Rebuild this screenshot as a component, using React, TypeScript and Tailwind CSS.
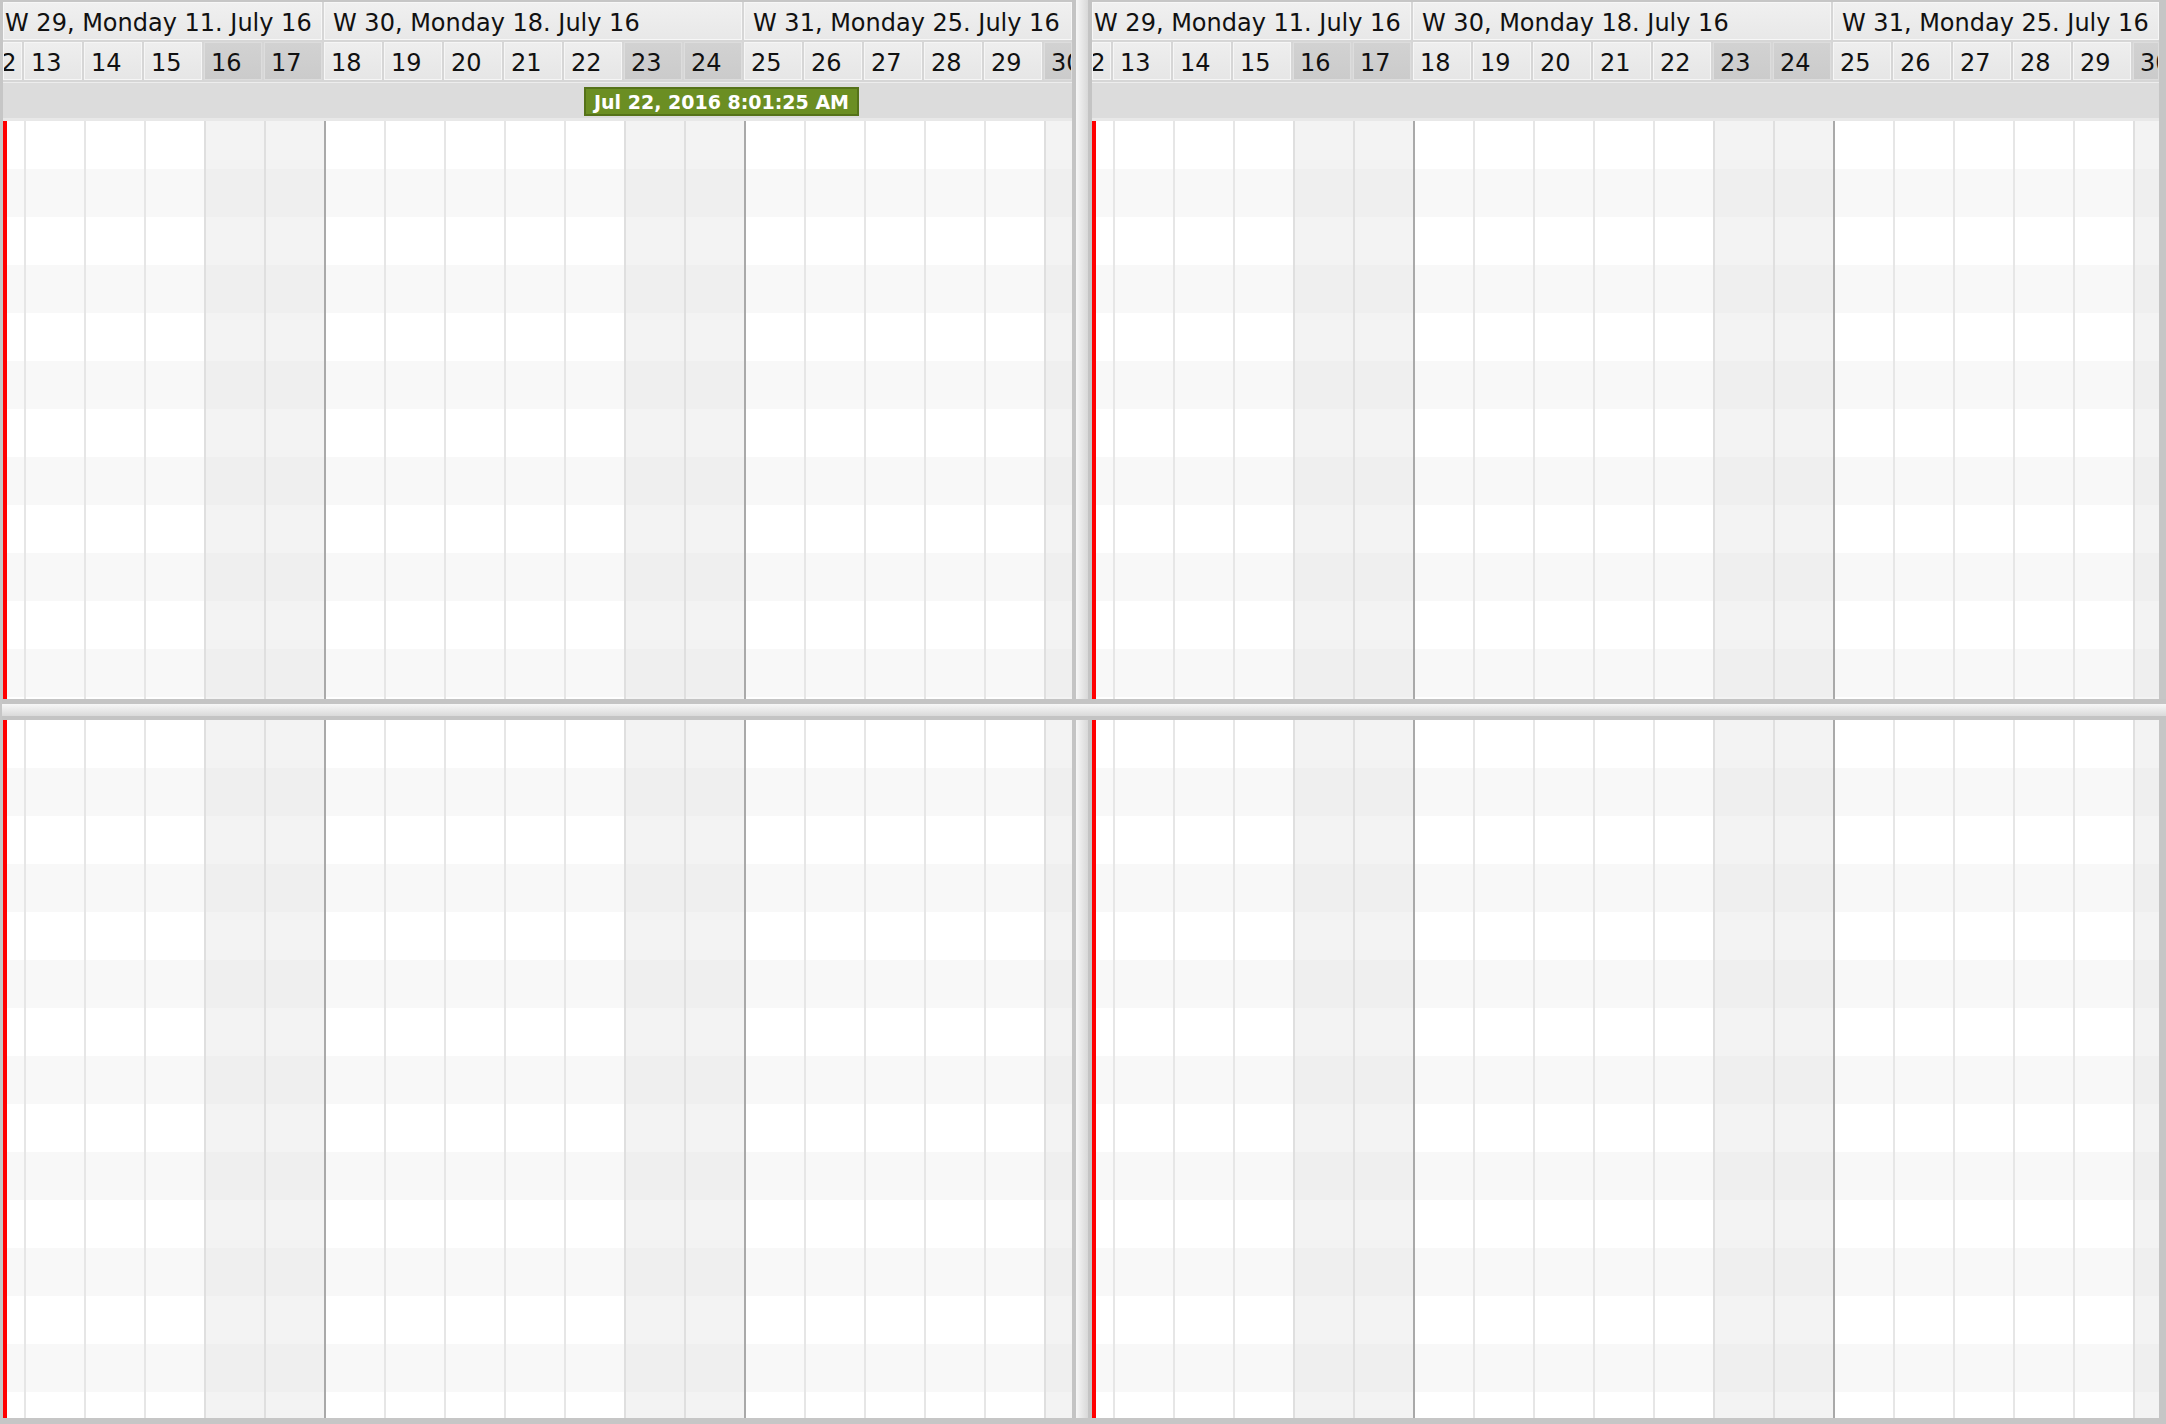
import React from "react";

type Col = { d: number; kind: "first" | "full" | "last"; weekend: boolean; monday: boolean };

const cols: Col[] = [];
for (let d = 12; d <= 30; d++) {
  const dow = (d - 11) % 7; // 0 = Monday (11 July 2016 was a Monday)
  cols.push({
    d,
    kind: d === 12 ? "first" : d === 30 ? "last" : "full",
    weekend: dow === 5 || dow === 6,
    monday: dow === 0,
  });
}

function cellClass(c: Col, odd: boolean): string {
  const w =
    c.kind === "first" ? "w-[21px] shrink-0" : c.kind === "last" ? "flex-1 min-w-0" : "w-[60px] shrink-0";
  const border =
    c.kind === "first"
      ? "border-l-4 border-l-[#ff0000]"
      : c.monday
      ? "border-l-2 border-l-[#a9a9a9]"
      : c.weekend
      ? "border-l-2 border-l-[#dfdfdf]"
      : "border-l-2 border-l-[#e6e6e6]";
  const bg = odd
    ? c.weekend
      ? "bg-[#efefef]"
      : "bg-[#f8f8f8]"
    : c.weekend
    ? "bg-[#f3f3f3]"
    : "bg-white";
  return `${w} ${border} ${bg} h-full`;
}

function Grid({ rows, heightClass }: { rows: number; heightClass: string }) {
  return (
    <div className={`${heightClass} overflow-hidden flex flex-col`}>
      {Array.from({ length: rows }).map((_, r) => (
        <div key={r} className="flex h-[48px] shrink-0">
          {cols.map((c) => (
            <div key={c.d} className={cellClass(c, r % 2 === 1)} />
          ))}
        </div>
      ))}
    </div>
  );
}

function DayCell({ c }: { c: Col }) {
  const w =
    c.kind === "first" ? "w-[19px] shrink-0" : c.kind === "last" ? "flex-1 min-w-0" : "w-[58px] shrink-0";
  const look = c.weekend
    ? "bg-linear-to-b from-[#d2d2d2] to-[#cbcbcb] border border-[#dddddd]"
    : "bg-linear-to-b from-[#eeeeee] to-[#e6e6e6] border border-[#f6f6f6]";
  return (
    <div className={`${w} ${look} h-full overflow-hidden flex items-center`}>
      <span
        className={`${c.kind === "first" ? "-ml-[18px]" : "pl-[6px]"} pt-[4px] text-[24px] leading-none text-[#111] whitespace-nowrap`}
      >
        {c.d}
      </span>
    </div>
  );
}

function WeekCell({ label, w, pad }: { label: string; w: string; pad: string }) {
  return (
    <div
      className={`${w} h-full overflow-hidden flex items-center bg-linear-to-b from-[#f0f0f0] to-[#e8e8e8] border border-[#f7f7f7]`}
    >
      <span className={`${pad} pt-[4px] text-[24px] leading-none text-[#111] whitespace-nowrap`}>{label}</span>
    </div>
  );
}

function Header({ badge }: { badge: boolean }) {
  return (
    <div className="flex flex-col bg-[#d6d6d6] shrink-0">
      <div className="flex h-[38px] gap-[2px]">
        <WeekCell label="W 29, Monday 11. July 16" w="w-[319px] shrink-0" pad="pl-[1px]" />
        <WeekCell label="W 30, Monday 18. July 16" w="w-[418px] shrink-0" pad="pl-[8px]" />
        <WeekCell label="W 31, Monday 25. July 16" w="flex-1 min-w-0" pad="pl-[8px]" />
      </div>
      <div className="h-[2px]" />
      <div className="flex h-[38px] gap-[2px]">
        {cols.map((c) => (
          <DayCell key={c.d} c={c} />
        ))}
      </div>
      <div className="h-[2px]" />
      <div className="h-[36px] bg-[#dcdcdc] border-t border-[#ededed] flex items-center">
        {badge && (
          <div className="ml-[581px] mt-[2px] w-[275px] h-[29px] shrink-0 bg-[#6b8e23] border-2 border-[#557219] flex items-center justify-center">
            <span className="pt-[2px] text-white font-bold text-[19px] leading-none whitespace-nowrap">
              Jul 22, 2016 8:01:25 AM
            </span>
          </div>
        )}
      </div>
      <div className="h-[3px] bg-[#e8e8e8]" />
    </div>
  );
}

function VSplit() {
  return (
    <div className="flex w-[20px] shrink-0 h-full">
      <div className="w-[4px] bg-[#c4c4c4]" />
      <div className="w-[12px] bg-linear-to-r from-[#f7f7f7] to-[#d8d8d8]" />
      <div className="w-[4px] bg-[#c4c4c4]" />
    </div>
  );
}

function HSplit() {
  return (
    <div className="flex flex-col h-[21px] shrink-0 pl-[2px]">
      <div className="h-[5px] bg-[#c4c4c4]" />
      <div className="h-[12px] bg-linear-to-b from-[#f7f7f7] to-[#dadada]" />
      <div className="h-[4px] bg-[#c4c4c4]" />
    </div>
  );
}

export default function App() {
  return (
    <div className="w-[2166px] h-[1424px] bg-[#c6c6c6] flex flex-col overflow-hidden font-['DejaVu_Sans',Verdana,sans-serif]">
      <div className="flex h-[699px] shrink-0 pl-[3px]">
        <div className="w-[1069px] shrink-0 mt-[2px] flex flex-col overflow-hidden">
          <Header badge={true} />
          <Grid rows={13} heightClass="h-[578px]" />
        </div>
        <VSplit />
        <div className="w-[1067px] shrink-0 mt-[2px] flex flex-col overflow-hidden">
          <Header badge={false} />
          <Grid rows={13} heightClass="h-[578px]" />
        </div>
      </div>
      <HSplit />
      <div className="flex h-[698px] shrink-0 pl-[3px]">
        <div className="w-[1069px] shrink-0 flex flex-col overflow-hidden">
          <Grid rows={15} heightClass="h-[698px]" />
        </div>
        <VSplit />
        <div className="w-[1067px] shrink-0 flex flex-col overflow-hidden">
          <Grid rows={15} heightClass="h-[698px]" />
        </div>
      </div>
    </div>
  );
}
